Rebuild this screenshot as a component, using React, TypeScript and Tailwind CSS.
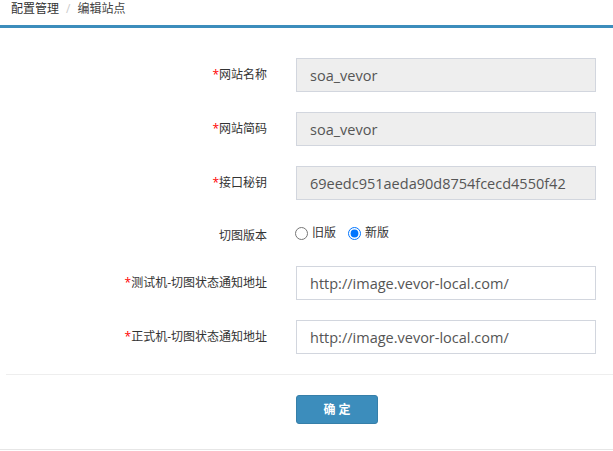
import React, { useState } from 'react'

type Field = {
  label: string
  value: string
  required?: boolean
  disabled?: boolean
}

const topFields: Field[] = [
  { label: '网站名称', value: 'soa_vevor', required: true, disabled: true },
  { label: '网站简码', value: 'soa_vevor', required: true, disabled: true },
  { label: '接口秘钥', value: '69eedc951aeda90d8754fcecd4550f42', required: true, disabled: true },
]

const urlFields: Field[] = [
  { label: '测试机-切图状态通知地址', value: 'http://image.vevor-local.com/', required: true },
  { label: '正式机-切图状态通知地址', value: 'http://image.vevor-local.com/', required: true },
]

//label on the left, right aligned
function FieldLabel({ label, required }: { label: string; required?: boolean }) {
  return (
    <div className="w-[267px] shrink-0 text-right text-[12px] text-[#333]">
      {required && <span className="text-[#ff0000]">*</span>}
      {label}
    </div>
  )
}

function InputRow({ field }: { field: Field }) {
  const [value, setValue] = useState(field.value)
  return (
    <div className="flex items-center mb-[20px]">
      <FieldLabel label={field.label} required={field.required} />
      <input
        type="text"
        value={value}
        disabled={field.disabled}
        onChange={(e) => setValue(e.target.value)}
        className={`ml-[29px] w-[300px] h-[34px] px-[13px] border border-[#d2d6de] text-[14.5px] text-[#555] outline-none ${
          field.disabled ? 'bg-[#eeeeee]' : 'bg-white'
        }`}
      />
    </div>
  )
}

export default function App() {
  const [version, setVersion] = useState('new')

  return (
    <div className="w-[613px] h-[451px] bg-white overflow-hidden font-['Open_Sans','Noto_Sans_CJK_SC',sans-serif]">
      {/* breadcrumb */}
      <div className="h-[25px] pt-[1px] px-[11px] text-[12px] leading-[16px] flex items-start">
        <span className="text-[#333]">配置管理</span>
        <span className="text-[#ccc] mx-[7px]">/</span>
        <span className="text-[#444]">编辑站点</span>
      </div>

      <div className="border-t-[3px] border-[#3c8dbc] border-b border-b-[#e6e6e6] h-[425px]">
        <div className="pt-[30px]">
          {topFields.map((f) => (
            <InputRow key={f.label} field={f} />
          ))}

          {/* version */}
          <div className="flex items-center h-[26px] mb-[20px]">
            <div className="pt-[6px]">
              <FieldLabel label="切图版本" />
            </div>
            <label className="ml-[28px] flex items-center text-[12px] text-[#333]">
              <input
                type="radio"
                name="version"
                checked={version === 'old'}
                onChange={() => setVersion('old')}
                className="w-[13px] h-[13px] m-0 mr-[4px]"
              />
              旧版
            </label>
            <label className="ml-[12px] flex items-center text-[12px] text-[#333]">
              <input
                type="radio"
                name="version"
                checked={version === 'new'}
                onChange={() => setVersion('new')}
                className="w-[13px] h-[13px] m-0 mr-[4px]"
              />
              新版
            </label>
          </div>

          {urlFields.map((f) => (
            <InputRow key={f.label} field={f} />
          ))}
        </div>

        <div className="ml-[6px] border-t border-[#eeeeee] pt-[20px]">
          <div className="pl-[290px]">
            <button
              type="button"
              className="w-[82px] h-[29px] rounded-[3px] bg-[#3c8dbc] border border-[#367fa9] text-white text-[12px] font-bold"
            >
              确 定
            </button>
          </div>
        </div>
      </div>
    </div>
  )
}
